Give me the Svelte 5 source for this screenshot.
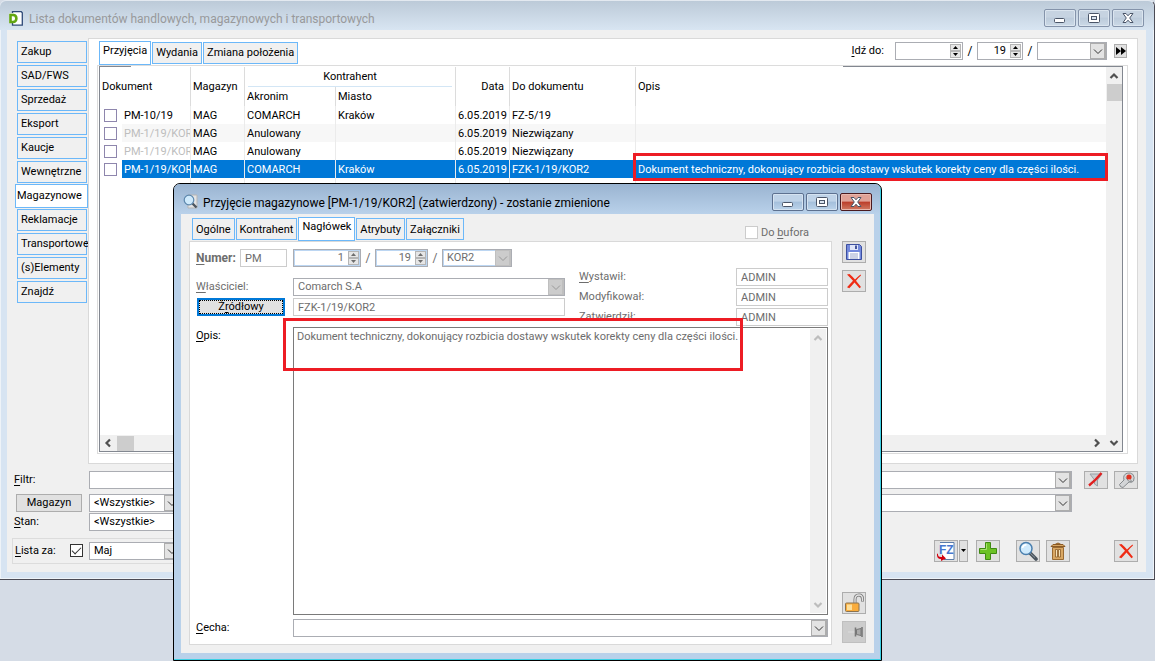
<script>
  const sections = ['Zakup', 'SAD/FWS', 'Sprzedaż', 'Eksport', 'Kaucje', 'Wewnętrzne', 'Magazynowe', 'Reklamacje', 'Transportowe', '(s)Elementy', 'Znajdź'];
  const listTabs = ['Przyjęcia', 'Wydania', 'Zmiana położenia'];
  const formTabs = ['Ogólne', 'Kontrahent', 'Nagłówek', 'Atrybuty', 'Załączniki'];
  const description = 'Dokument techniczny, dokonujący rozbicia dostawy wskutek korekty ceny dla części ilości.';
  const rows = [
    { doc: 'PM-10/19', mag: 'MAG', name: 'COMARCH', city: 'Kraków', date: '6.05.2019', ref: 'FZ-5/19', note: '' },
    { doc: 'PM-1/19/KOR', mag: 'MAG', name: 'Anulowany', city: '', date: '6.05.2019', ref: 'Niezwiązany', note: '', cancelled: true, alt: true },
    { doc: 'PM-1/19/KOR', mag: 'MAG', name: 'Anulowany', city: '', date: '6.05.2019', ref: 'Niezwiązany', note: '', cancelled: true },
    { doc: 'PM-1/19/KOR', mag: 'MAG', name: 'COMARCH', city: 'Kraków', date: '6.05.2019', ref: 'FZK-1/19/KOR2', note: description, selected: true }
  ];
  const people = [
    { id: 'issued', key: 'W', rest: 'ystawił:', value: 'ADMIN' },
    { id: 'modified', key: '', rest: 'Modyfikował:', value: 'ADMIN' },
    { id: 'approved', key: '', rest: 'Zatwierdził:', value: 'ADMIN' }
  ];
  let section = $state('Magazynowe');
  let listTab = $state('Przyjęcia');
  let formTab = $state('Nagłówek');
</script>

{#snippet chevron(dir)}
  <svg class="chev {dir}" viewBox="0 0 10 10" width="10" height="10" aria-hidden="true"><path d="M1 3.500 5 7.500l4-4" fill="none" stroke="currentColor" stroke-width="1" /></svg>
{/snippet}

{#snippet scrollArrow(dir)}
  <svg class="chev {dir}" viewBox="0 0 10 10" width="10" height="10" aria-hidden="true"><path d="M1.500 3 5 6.500 8.500 3" fill="none" stroke="currentColor" stroke-width="2.200" /></svg>
{/snippet}

{#snippet combo(id, label, value, cls)}
  <span class="combo {cls}">
    <select {id} aria-label={label} disabled={cls.includes('off')}><option>{value}</option></select>
    <span class="drop">{@render chevron('')}</span>
  </span>
{/snippet}

{#snippet spinner(id, label, value, cls)}
  <span class="spin {cls}">
    <input {id} type="text" aria-label={label} {value} disabled={cls.includes('off')} />
    <span class="steps">
      <button type="button" aria-label="Zwiększ" disabled={cls.includes('off')}><svg viewBox="0 0 5 3" width="5" height="3"><path d="M2.500 0 5 3H0z" fill="currentColor" /></svg></button>
      <button type="button" aria-label="Zmniejsz" disabled={cls.includes('off')}><svg viewBox="0 0 5 3" width="5" height="3"><path d="M0 0h5L2.500 3z" fill="currentColor" /></svg></button>
    </span>
  </span>
{/snippet}

{#snippet windowButtons()}
  <div class="winbtns">
    <button type="button" aria-label="Minimalizuj"><svg viewBox="0 0 14 12" width="14" height="12"><rect x="1.500" y="6.500" width="10" height="4" rx="1" fill="#fff" stroke="#4a5568" /></svg></button>
    <button type="button" aria-label="Maksymalizuj"><svg viewBox="0 0 14 12" width="14" height="12"><rect x="1.500" y="1.500" width="11" height="9" rx="1" fill="#fff" stroke="#4a5568" /><rect x="4.500" y="4.500" width="5" height="3" fill="#dbe5f0" stroke="#4a5568" /></svg></button>
    <button type="button" class="close" aria-label="Zamknij"><svg viewBox="0 0 14 12" width="14" height="12"><path d="M2 1.500h3l2 2.300 2-2.300h3L8.700 6 12 10.500H9L7 8.200 5 10.500H2L5.300 6z" fill="#fff" stroke="#4a5568" /></svg></button>
  </div>
{/snippet}

{#snippet redCross()}
  <svg viewBox="0 0 16 16" width="16" height="16"><path d="M1 1.500 3.500 1Q7 4 9 6.500 12 3.500 14.500 1.500L15 2.500Q12 5 10 7.800L15 14l-1.500 1.300L8.500 9.500Q5.500 13 3.300 15.300L1 14.300Q4 11 7 7.800 4 4.500 1 1.500z" fill="#ef2b14" /></svg>
{/snippet}

{#snippet lens(size)}
  <svg viewBox="0 0 20 20" width={size} height={size}><path d="m12 12 6 6" stroke="#4c565f" stroke-width="3.600" stroke-linecap="round" /><path d="m12 12 5 4.600" stroke="#8b98a3" stroke-width="1" /><circle cx="8" cy="7.500" r="6" fill="#cfeafc" stroke="#4a7fae" stroke-width="1.500" /><path d="M4.500 7Q5 3.800 8.500 3.800" stroke="#fff" stroke-width="1.600" fill="none" /></svg>
{/snippet}

<main class="desktop">
  <section class="window main" aria-label="Lista dokumentów">
    <header class="titlebar">
      <svg class="appicon" viewBox="0 0 14 15" width="14" height="15" aria-hidden="true"><path d="M3.500.7h8.800l1 1v12.500H3.500z" fill="#fff" stroke="#2f4a78" stroke-width="1.300" /><path d="M0 2h5v10H0z" fill="#e9f0e0" /><path d="M1.500 4h2.500C8.500 4 8.500 11 4 11H1.500z" fill="#fff" stroke="#62a612" stroke-width="2.600" /></svg>
      <h1>Lista dokumentów handlowych, magazynowych i transportowych</h1>
      {@render windowButtons()}
    </header>

    <div class="client">
      <div class="upper">
        <nav class="side">
          {#each sections as s}
            <button type="button" class:on={section === s} onclick={() => (section = s)}>{s}</button>
          {/each}
        </nav>

        <div class="sheet">
          <div class="sheethead">
            <div class="tabs">
              {#each listTabs as t}
                <button type="button" class:on={listTab === t} onclick={() => (listTab = t)}>{t}</button>
              {/each}
            </div>
            <div class="goto">
              <label for="goto-no"><u>I</u>dź do:</label>
              {@render spinner('goto-no', 'Numer', '', 'w68')}
              <span class="slash">/</span>
              {@render spinner('goto-year', 'Rok', '19', 'w46')}
              <span class="slash">/</span>
              {@render combo('goto-series', 'Seria', '', 'w70')}
              <button type="button" class="ff" aria-label="Przejdź"><svg viewBox="0 0 10 8" width="10" height="8"><path d="M0 0l5 4-5 4zM5 0l5 4-5 4z" fill="#000" /></svg></button>
            </div>
          </div>

          <div class="inner">
            <div class="grid">
              <div class="viewport">
                <table>
                  <colgroup>
                    <col class="c22" /><col class="c68" /><col class="c54" /><col class="c91" /><col class="c120" /><col class="c54" /><col class="c126" /><col />
                  </colgroup>
                  <thead>
                    <tr>
                      <th rowspan="2" colspan="2" class="first">Dokument</th>
                      <th rowspan="2">Magazyn</th>
                      <th colspan="2" class="group"><span>Kontrahent</span></th>
                      <th rowspan="2" class="num">Data</th>
                      <th rowspan="2">Do dokumentu</th>
                      <th rowspan="2" class="last">Opis</th>
                    </tr>
                    <tr><th>Akronim</th><th>Miasto</th></tr>
                  </thead>
                  <tbody>
                    {#each rows as r}
                      <tr class:alt={r.alt} class:selected={r.selected}>
                        <td class="check"><input type="checkbox" aria-label="Zaznacz {r.doc}" /></td>
                        <td class="doc" class:cancelled={r.cancelled}>{r.doc}</td>
                        <td>{r.mag}</td>
                        <td>{r.name}</td>
                        <td>{r.city}</td>
                        <td class="date">{r.date}</td>
                        <td>{r.ref}</td>
                        <td class="note">{r.note}{#if r.selected}<span class="mark rowmark"></span>{/if}</td>
                      </tr>
                    {/each}
                    <tr class="filler"><td class="check"></td><td></td><td></td><td></td><td></td><td></td><td></td><td></td></tr>
                  </tbody>
                </table>
                <div class="hbar">
                  {@render scrollArrow('left')}<span class="thumb"></span><span class="grow"></span>{@render scrollArrow('right')}
                </div>
              </div>
              <div class="vbar">
                {@render scrollArrow('up')}<span class="thumb"></span><span class="grow"></span>{@render scrollArrow('')}
              </div>
            </div>
          </div>
        </div>
      </div>

      <div class="filters">
        <label for="filter"><u>F</u>iltr:</label>
        {@render combo('filter', 'Filtr', '', 'wide')}
        <div class="tools">
          <button type="button" class="tool low" aria-label="Wyczyść filtr"><svg viewBox="0 0 18 16" width="18" height="16"><path d="M3 2h12l-4.500 6v6l-3-2V8z" fill="#c9cdd0" stroke="#9aa0a5" /><path d="M2 13.500Q9 8 14.500 1" stroke="#e02020" stroke-width="2.400" fill="none" /></svg></button>
          <button type="button" class="tool low" aria-label="Konstruktor filtra"><svg viewBox="0 0 18 16" width="18" height="16"><path d="M2.500 12.500 7 8Q5.500 3 10 1.200q3.500-1 6 1.300 2 3 .5 6.500-1.500 2-4.500 1L6 15.500Q3 15.500 2.500 12.500z" fill="#d3d5d7" stroke="#85898c" /><path d="M9 5.500 11.500 9l3 .5-1-2" fill="#f0f0f0" stroke="#85898c" /><circle cx="12" cy="5" r="2.600" fill="#df3220" /></svg></button>
        </div>
        <button type="button" class="plain">Magazyn</button>
        <div class="pair">{@render combo('warehouse', 'Magazyn', '<Wszystkie>', 'pick')}{@render combo('warehouse2', 'Opis magazynu', '', 'wide')}</div>
        <span></span>
        <label for="state"><u>S</u>tan:</label>
        {@render combo('state', 'Stan', '<Wszystkie>', 'state')}
        <span></span>
      </div>

      <footer>
        <div class="period">
          <label for="period-on"><u>L</u>ista za:</label>
          <input id="period-on" type="checkbox" class="tick" checked />
          {@render combo('month', 'Miesiąc', 'Maj', 'pick')}
        </div>
        <div class="actions">
          <div class="split">
            <button type="button" class="tool" aria-label="Generuj FZ"><svg viewBox="0 0 20 20" width="20" height="20"><path d="M4 1.500h14v17H8" fill="#fff" stroke="#5d7da8" /><text x="3" y="13" font-family="Liberation Sans" font-size="12" font-weight="700" fill="#4777cf">FZ</text><path d="M2 12.500q-.5 4 4 3.500v-2.500l4 4-5 2.500v-2Q.5 18 1 13z" fill="#d3000f" /></svg></button>
            <button type="button" class="tool slim" aria-label="Więcej"><svg viewBox="0 0 5 3" width="5" height="3"><path d="M0 0h5L2.500 3z" fill="#000" /></svg></button>
          </div>
          <button type="button" class="tool" aria-label="Dodaj"><svg viewBox="0 0 20 20" width="20" height="20"><path d="M7.500 1.500h5v6h6v5h-6v6h-5v-6h-6v-5h6z" fill="#6cc226" stroke="#3f8a12" /><path d="M8.500 2.500v6h-6" fill="none" stroke="#a9e070" /></svg></button>
          <div class="gap"></div>
          <button type="button" class="tool" aria-label="Podgląd">{@render lens(20)}</button>
          <button type="button" class="tool" aria-label="Usuń"><svg viewBox="0 0 20 20" width="20" height="20"><path d="M7 3.500q3-3 6 0M3 5.500l2-2h10l2 2z" fill="#d9a763" stroke="#8a5a25" /><path d="M4.500 6.500h11v12h-11z" fill="#d9a763" stroke="#9a6a31" /><path d="M7.500 8.500h2v7.500h-2zM10.500 8.500h2v7.500h-2z" fill="#f6e2b8" stroke="#8a5a25" stroke-width=".8" /></svg></button>
          <button type="button" class="tool exit" aria-label="Zamknij">{@render redCross()}</button>
        </div>
      </footer>
    </div>
  </section>

  <section class="window dialog" aria-label="Przyjęcie magazynowe">
    <header class="titlebar">
      <span class="docicon"><svg viewBox="0 0 16 16" width="16" height="16"><path d="M5 1h9v13H5z" fill="#e4e4e4" stroke="#b5b5b5" /><path d="m9.500 9.500 4 4" stroke="#4c565f" stroke-width="2.400" /><circle cx="6" cy="6" r="4.800" fill="#cfeafc" stroke="#5c87ad" stroke-width="1.200" /></svg></span>
      <h2>Przyjęcie magazynowe [PM-1/19/KOR2] (zatwierdzony) - zostanie zmienione</h2>
      {@render windowButtons()}
    </header>

    <div class="client">
      <div class="formside">
        <div class="formhead">
          <div class="tabs">
            {#each formTabs as t}
              <button type="button" class:on={formTab === t} onclick={() => (formTab = t)}>{t}</button>
            {/each}
          </div>
          <label class="buffer"><input type="checkbox" disabled /> <span>Do <u>b</u>ufora</span></label>
        </div>

        <form class="form" onsubmit={(e) => e.preventDefault()}>
          <div class="numrow">
            <label for="num-type" class="strong"><u>N</u>umer:</label>
            <input id="num-type" class="field" type="text" value="PM" disabled />
            {@render spinner('num-no', 'Numer dokumentu', '1', 'off blue w68')}
            <span class="slash">/</span>
            {@render spinner('num-year', 'Rok dokumentu', '19', 'off blue w53')}
            <span class="slash">/</span>
            {@render combo('num-series', 'Seria dokumentu', 'KOR2', 'off blue w70')}
          </div>

          <div class="owners">
            <div class="owner">
              <label for="owner" class="dim"><u>W</u>łaściciel:</label>
              {@render combo('owner', 'Właściciel', 'Comarch S.A', 'off')}
              <button type="button" class="source">Ź<u>r</u>ódłowy</button>
              <input class="field" type="text" value="FZK-1/19/KOR2" aria-label="Dokument źródłowy" disabled />
            </div>
            <div class="people">
              {#each people as p}
                <label for={p.id} class="dim">{#if p.key}<u>{p.key}</u>{/if}{p.rest}</label>
                <input id={p.id} class="field" type="text" value={p.value} disabled />
              {/each}
            </div>
          </div>

          <div class="body">
            <label for="desc"><u>O</u>pis:</label>
            <div class="memo">
              <textarea id="desc" readonly value={description}></textarea>
              <div class="vbar pale">{@render scrollArrow('up')}<span class="grow"></span>{@render scrollArrow('')}</div>
              <span class="mark memomark"></span>
            </div>
            <label for="feature"><u>C</u>echa:</label>
            {@render combo('feature', 'Cecha', '', '')}
          </div>
        </form>
      </div>

      <div class="rail">
        <button type="button" class="tool" aria-label="Zapisz"><svg viewBox="0 0 18 18" width="18" height="18"><path d="M1.500 1.500h13l2 2v13h-15z" fill="#7389dc" stroke="#3c4f9f" /><path d="M5 2h8v5H5z" fill="#dfe5f8" /><path d="M10 2.500h2v3.500h-2z" fill="#44549c" /><path d="M3.500 9h11v7h-11z" fill="#fff" /><path d="M5 11h8M5 13h8M5 15h8" stroke="#9aa6cc" /></svg></button>
        <button type="button" class="tool" aria-label="Anuluj">{@render redCross()}</button>
        <span class="grow"></span>
        <button type="button" class="tool" aria-label="Odblokuj"><svg viewBox="0 0 20 20" width="20" height="20"><path d="M11 10V6.500Q11 2 15 2q3.500 0 3.500 4v2.500" fill="none" stroke="#777" stroke-width="3" /><path d="M11 10V6.500Q11 2 15 2q3.500 0 3.500 4v2" fill="none" stroke="#e2e2e2" stroke-width="1.400" /><rect x="1.500" y="10" width="13.500" height="8.500" rx="1" fill="#f9ac3c" stroke="#8a7350" /><path d="M3 11.500h5v5.500H3z" fill="#fddf9a" /></svg></button>
        <button type="button" class="tool dead" aria-label="Przypnij" disabled><svg viewBox="0 0 18 12" width="18" height="12"><path d="M3 6h7" stroke="#dcdcdc" /><path d="M10.500 1.500v9M17 1v10" stroke="#777" stroke-width="1.600" /><path d="M11.500 3.500 16 2.500v7l-4.500-1z" fill="#aaa" stroke="#777" /></svg></button>
      </div>
    </div>
  </section>
</main>

<style>
  :global(body) { margin: 0; background: #fff; }
  * { box-sizing: border-box; }
  .desktop { position: relative; display: flex; margin: 0 8px 3px 0; min-height: calc(100vh - 3px); background: #d5dce6; font: 11px/14px Roboto, "Liberation Sans", sans-serif; color: #000; overflow: hidden; }
  button, input, select, textarea { font: inherit; color: inherit; margin: 0; padding: 0; border-radius: 0; }
  svg { display: block; flex: none; }
  u { text-underline-offset: 2px; }
  .grow { flex: 1; }
  .slash { width: 14px; text-align: center; font-size: 12px; }

  /* windows */
  .window { display: flex; flex-direction: column; }
  .main { flex: 1; margin-bottom: 81px; border: 1px solid #4b4b55; border-left: 0; border-top-color: #e3e9f0; border-radius: 6px 6px 0 0; background: #d7e4f2; padding: 0 8px 7px 7px; box-shadow: inset 1px 0 #eef3f8, inset -1px -1px #eef3f8; }
  .titlebar { display: flex; align-items: center; margin: 0 -8px 0 -7px; padding: 0 10px 0 9px; height: 29px; background: linear-gradient(#bccad8, #d8e5f2); border-radius: 6px 6px 0 0; }
  .titlebar h1, .titlebar h2 { flex: 1; margin: 7px 0 0; font-size: 12px; line-height: 16px; font-weight: 400; white-space: nowrap; }
  .main h1 { color: #98999b; padding-left: 6px; }
  .appicon { margin-top: 6px; }
  .winbtns { display: flex; gap: 2px; padding-top: 5px; }
  .winbtns button { display: grid; place-items: center; width: 32px; height: 18px; border: 1px solid #8493aa; border-radius: 2px; background: linear-gradient(#c6d3e1 45%, #bccbdb 50%, #cbd9e7); box-shadow: inset 0 0 0 1px #dbe5ef; }
  .client { flex: 1; display: flex; background: #f0f0f0; }
  .main .client { flex-direction: column; padding: 8px 8px 8px 5px; }

  .dialog { position: absolute; left: 173px; top: 183px; bottom: 0; width: 709px; border: 1px solid #000; border-radius: 7px 7px 0 0; background: #b9d1ea; padding: 0 7px 7px; box-shadow: inset -1px -1px #3cd0e4; }
  .dialog .titlebar { margin: 0 -6px 0 -7px; height: 30px; padding: 0 8px 0 9px; background: linear-gradient(#9ab4d1, #b9d1ea); }
  .dialog h2 { padding-left: 4px; }
  .docicon { margin-top: 6px; }
  .dialog .winbtns { padding-top: 6px; }
  .dialog .winbtns button { border-color: #5d7190; background: linear-gradient(#bfd3e8 45%, #a4bfdb 50%, #bcd4eb); box-shadow: inset 0 0 0 1px #d5e3f1; }
  .dialog .winbtns .close { border-color: #4a1a1f; background: linear-gradient(#e0a297 45%, #bb3d2a 50%, #d07a63); box-shadow: inset 0 0 0 1px #e9b8ae; }

  /* list window */
  .upper { flex: 1; display: flex; }
  .side { display: flex; flex-direction: column; gap: 2px; width: 76px; padding: 3px 1px 0 5px; }
  .side button { height: 22px; flex: none; padding: 0 0 0 3px; border: 1px solid #6cb8f9; background: #f0f0f0; text-align: left; white-space: nowrap; line-height: 16px; }
  .side .on { height: 24px; margin: -1px -1px -1px -2px; padding-left: 1px; background: #fff; }
  .sheet { flex: 1; display: flex; flex-direction: column; border: 1px solid #d9d9d9; background: #fff; padding: 2px 9px 9px 8px; min-width: 0; }
  .sheethead { display: flex; justify-content: space-between; height: 24px; padding: 0 1px 0 2px; }
  .tabs { display: flex; align-items: flex-end; gap: 1px; }
  .tabs button { height: 22px; margin-bottom: 1px; padding: 0 3px; border: 1px solid #6cb8f9; background: #f0f0f0; white-space: nowrap; line-height: 18px; }
  .tabs .on { height: 24px; margin-bottom: 0; background: #fff; padding-bottom: 4px; }
  .formhead .tabs button:not(.on) { padding-top: 2px; }
  .goto { display: flex; align-items: center; height: 20px; }
  .goto label { margin: 0 11px 0 0; }
  .ff { display: grid; place-items: center; width: 13px; height: 14px; margin-left: 7px; border: 1px solid #adadad; background: #e1e1e1; }
  .inner { flex: 1; display: flex; border: 1px solid #dcdcdc; padding: 0 4px 1px 1px; }
  .grid { flex: 1; display: flex; border: 1px solid #828790; border-top: 0; padding-top: 1px; min-width: 0; background: linear-gradient(#828790, #828790) 0 0 / 31px 1px no-repeat, linear-gradient(#828790, #828790) 100% 0 / 279px 1px no-repeat; }
  .viewport { flex: 1; display: flex; flex-direction: column; min-width: 0; }
  table { flex: 1; display: table; width: 100%; height: 300px; table-layout: fixed; border-collapse: separate; border-spacing: 0; }
  .c22 { width: 22px; } .c54 { width: 54px; } .c68 { width: 69px; } .c91 { width: 91px; } .c120 { width: 120px; } .c126 { width: 126px; }
  th, td { padding: 0 2px; border-right: 1px solid #ebebeb; text-align: left; font-weight: 400; white-space: nowrap; overflow: hidden; }
  th { border-right-color: #dcdcdc; height: 18px; }
  th.last, td:last-child { border-right: 0; }
  thead tr:first-child th { height: 20px; }
  thead tr + tr th { height: 19px; }
  .group { text-align: center; padding: 0 3px; }
  .group span { display: block; line-height: 18px; border-bottom: 1px solid #d3e6f5; }
  .num { text-align: right; padding-right: 5px; }
  tbody td { height: 18px; padding-top: 1px; line-height: 16px; }
  td.check { border-right: 0; padding: 0 0 0 4px; background: #fff; }
  td.doc { padding-right: 0; }
  td.date { padding-left: 0; text-align: right; }
  .alt td { background: #f7f7f7; }
  .selected td { background: #0078d7; color: #fff; }
  .alt td.check, .selected td.check { background: #fff; }
  .cancelled { color: #bdbdbd; }
  .filler td { height: auto; }
  td.note { position: relative; overflow: visible; }
  .mark { position: absolute; border: 3px solid #ed1c24; pointer-events: none; }
  .rowmark { inset: -7px -2px -3px -3px; }
  input[type='checkbox'] { appearance: none; display: block; width: 13px; height: 13px; border: 1px solid #8e86ad; background: #fff; }
  .hbar { display: flex; align-items: center; height: 16px; background: #f0f0f0; padding: 0 4px 0 3px; color: #505050; }
  .hbar .thumb { width: 17px; height: 15px; background: #cdcdcd; margin-left: 4px; }
  .vbar { display: flex; flex-direction: column; align-items: center; width: 16px; padding: 4px 0 3px; background: #f0f0f0; color: #505050; }
  .vbar .thumb { width: 15px; height: 17px; background: #cdcdcd; margin-top: 3px; }
  .chev.left { transform: rotate(90deg); } .chev.right { transform: rotate(-90deg); } .chev.up { transform: rotate(180deg); }

  /* combos and spinners */
  .combo { display: flex; height: 18px; border: 1px solid #abadb3; background: #fff; min-width: 0; }
  .combo select { appearance: none; flex: 1; min-width: 0; border: 0; background: transparent; padding: 0 4px; outline: 0; opacity: 1; }
  .drop { display: grid; place-items: center; width: 16px; border: 1px solid #adadad; border-right-width: 2px; background: #e3e3e3; color: #333; }
  .spin { display: flex; height: 18px; border: 1px solid #abadb3; background: #fff; }
  .spin input { flex: 1; min-width: 0; width: 0; border: 0; background: transparent; text-align: right; padding-right: 4px; outline: 0; }
  .steps { display: flex; flex-direction: column; width: 12px; padding: 1px 1px 1px 0; }
  .steps button { flex: 1; display: grid; place-items: center; border: 1px solid #b5b5b5; background: #e6e6e6; }
  .w68 { width: 68px; } .w46 { width: 46px; } .w53 { width: 53px; } .w70 { width: 70px; }
  .blue { box-shadow: inset 0 0 0 1px #bcd6f2; }
  .off { color: #6d6d6d; }
  .off .drop { background: #cccccc; color: #999; border-color: #bfbfbf; }
  .field { height: 18px; border: 1px solid #cccccc; background: #fff; color: #6d6d6d; padding: 0 4px; min-width: 0; }

  .filters { display: grid; grid-template-columns: 77px 1fr 66px; row-gap: 1px; align-items: center; padding-top: 7px; }
  .filters label { padding-left: 2px; }
  .filters > .combo.wide, .filters > label:first-child, .tools { margin-bottom: 4px; }
  .tools { display: flex; justify-content: flex-end; gap: 6px; }
  .pair { display: flex; }
  .pair .wide { flex: 1; margin-left: -1px; }
  .pick { width: 92px; }
  .state { width: 140px; }
  .plain { width: 66px; height: 18px; margin-left: 4px; border: 1px solid #adadad; background: #e1e1e1; }
  .tool { display: grid; place-items: center; width: 24px; height: 22px; flex: none; border: 1px solid #adadad; background: #e1e1e1; }
  .low { height: 18px; }
  .slim { width: 9px; }
  .dead { background: #cccccc; border-color: #bfbfbf; }
  footer { display: flex; justify-content: space-between; align-items: center; padding-top: 6px; height: 33px; }
  .period { display: flex; align-items: center; height: 26px; border: 1px solid #dcdcdc; padding-left: 2px; }
  .period label { width: 55px; }
  .period .tick { border-color: #333; margin-right: 6px; }
  .tick:checked::after { content: ''; display: block; width: 8px; height: 4px; margin: 2px 0 0 1px; border: solid #333; border-width: 0 0 1px 1px; transform: rotate(-45deg); }
  .actions { display: flex; gap: 6px; }
  .split { display: flex; gap: 1px; margin-right: 2px; }
  .gap { width: 4px; }
  .exit { margin-left: 38px; }

  /* document form */
  .dialog .client { padding: 3px 8px 8px; gap: 10px; }
  .formside { flex: 1; display: flex; flex-direction: column; min-width: 0; }
  .formhead { display: flex; justify-content: space-between; padding: 0 23px 0 3px; height: 24px; }
  .buffer { display: flex; align-items: center; gap: 3px; color: #6d6d6d; padding-top: 7px; }
  .buffer input { border-color: #cccccc; }
  .form { flex: 1; display: flex; flex-direction: column; border: 1px solid #d9d9d9; background: #fff; padding: 7px 3px 7px 6px; }
  .numrow { display: flex; align-items: center; color: #6d6d6d; }
  .numrow .field { width: 47px; margin-right: 6px; }
  .strong { font-weight: 700; width: 44px; font-size: 12px; }
  .dim { color: #6d6d6d; }
  .owners { display: flex; gap: 14px; }
  .owner { flex: 1; display: grid; grid-template-columns: 97px 1fr; row-gap: 2px; padding-top: 11px; align-content: start; align-items: center; }
  .source { width: 88px; height: 18px; margin-left: 1px; border: 2px solid #0078d7; background: #e1e1e1; outline: 1px dotted #000; outline-offset: -3px; }
  .people { width: 249px; display: grid; grid-template-columns: 1fr 92px; row-gap: 2px; padding-top: 1px; align-items: center; }
  .body { flex: 1; display: grid; grid-template-columns: 97px 1fr; grid-template-rows: 1fr 18px; row-gap: 4px; padding-top: 1px; align-items: start; }
  .body > label { padding-top: 2px; }
  .memo { position: relative; display: flex; align-self: stretch; border: 1px solid #7a7a7a; padding: 1px; }
  textarea { flex: 1; border: 0; resize: none; outline: 0; padding: 1px 0 0 2px; color: #6d6d6d; overflow: hidden; background: transparent; }
  .pale { color: #bdbdbd; }
  .memomark { left: -11px; top: -10px; width: 460px; height: 53px; }
  .rail { display: flex; flex-direction: column; gap: 7px; width: 24px; padding: 24px 0 2px; }
</style>
